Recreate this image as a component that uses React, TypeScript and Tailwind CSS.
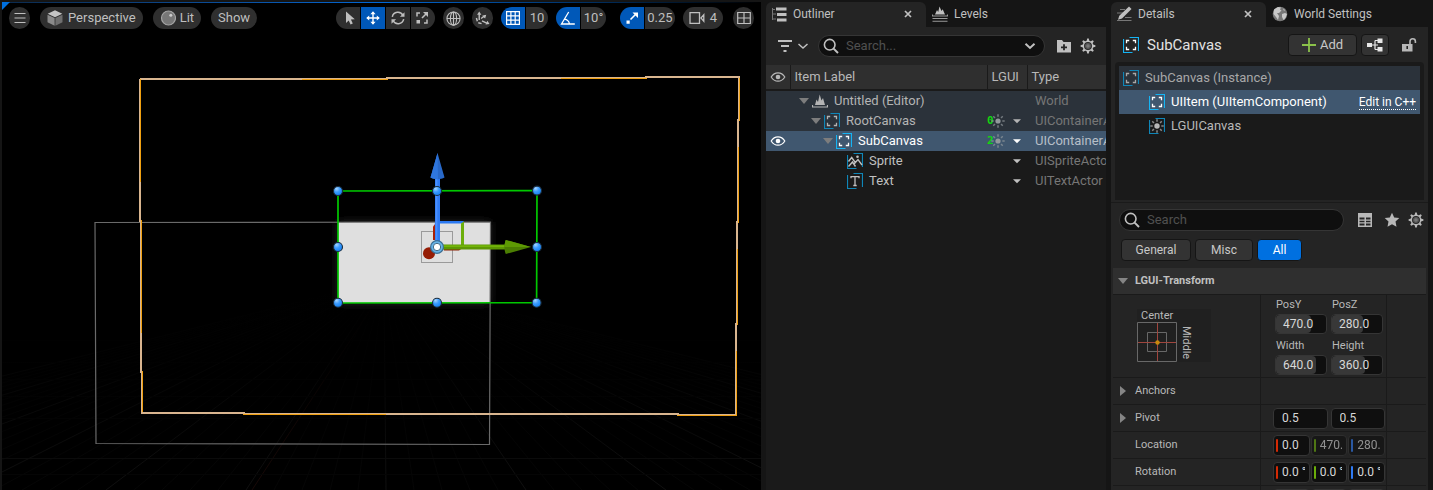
import type { ReactNode } from "react";

type IconProps = { className?: string; children: ReactNode; box?: string };

function Icon({ className = "size-4", children, box = "0 0 16 16" }: IconProps) {
  return (
    <svg viewBox={box} className={`shrink-0 ${className}`} fill="none" stroke="currentColor" strokeWidth="1.2" aria-hidden="true">
      {children}
    </svg>
  );
}

/* ---------- shared icons ---------- */

function GearIcon() {
  return (
    <Icon>
      {[0, 45, 90, 135, 180, 225, 270, 315].map((a) => (
        <path key={a} d="M6.6 3.2 7.2.6h1.6l.6 2.6z" fill="currentColor" stroke="none" transform={`rotate(${a} 8 8)`} />
      ))}
      <circle cx="8" cy="8" r="4.7" strokeWidth="1.5" />
      <circle cx="8" cy="8" r="2.4" fill="#777" stroke="#555" />
    </Icon>
  );
}

function SearchIcon() {
  return (
    <Icon>
      <circle cx="6.7" cy="6.7" r="5.3" strokeWidth="1.6" />
      <path d="m10.6 10.6 4.4 4.4" strokeWidth="2" />
    </Icon>
  );
}

function ChevronIcon() {
  return (
    <Icon className="size-3" box="0 0 12 12">
      <path d="m1.500 3.800 4.500 4.200 4.500-4.200" strokeWidth="2" />
    </Icon>
  );
}

function CloseIcon() {
  return (
    <Icon className="size-2" box="0 0 8 8">
      <path d="m1 1 6 6M7 1 1 7" strokeWidth="1.7" />
    </Icon>
  );
}

function EyeIcon() {
  return (
    <Icon>
      <path d="M1.2 8C4.600 2.400 11.400 2.400 14.800 8 11.400 13.600 4.600 13.600 1.200 8Z" />
      <circle cx="8" cy="8" r="2.3" fill="currentColor" stroke="none" />
    </Icon>
  );
}

function Frame({ bright, children }: { bright?: boolean; children: ReactNode }) {
  const c = bright ? "#15b4f4" : "#0f86b8";
  return (
    <Icon>
      <path d="M6.500.500h9v13.500M9.500 15.500h-9V2" stroke={c} />
      {children}
    </Icon>
  );
}

function CanvasIcon({ bright }: { bright?: boolean }) {
  return (
    <Frame bright={bright}>
      <path d="M3.500 6.200V3.500h2.700M9.800 3.500h2.700v2.700M12.500 9.800v2.700H9.800M6.200 12.500H3.500V9.800" strokeWidth="1.3" />
    </Frame>
  );
}

function SpriteIcon() {
  return (
    <Frame>
      <path d="m1.500 8.500 3.200-4 3.500 4.800M1.500 13.500 5.500 9l3 4.500M7 11l4-4.500 4 5.500" strokeWidth="1.4" />
      <circle cx="10.500" cy="3.800" r="1.300" fill="currentColor" stroke="none" />
    </Frame>
  );
}

function TextIcon() {
  return (
    <Frame>
      <path d="M4 5.300V3.700h8v1.600M8 3.700v8.800M6.300 12.500h3.400" strokeWidth="1.300" />
    </Frame>
  );
}

function Rays({ r = 2.6 }: { r?: number }) {
  return (
    <>
      <circle cx="8" cy="8" r={r} fill="currentColor" stroke="none" />
      {[0, 45, 90, 135, 180, 225, 270, 315].map((a) => (
        <path key={a} d="M8 3.700V1.300" strokeWidth="1.500" opacity="0.700" transform={`rotate(${a} 8 8)`} />
      ))}
    </>
  );
}

function LevelIcon() {
  return (
    <Icon>
      <path d="M3 12 4.500 6.500 6 9 7.700 1.500 9.500 7.500 11 5l2 7z" fill="currentColor" stroke="none" />
      <path d="M.5 12v2h15v-2" />
    </Icon>
  );
}

/* ---------- viewport ---------- */

const TAN = "#d9b58f";
const ORANGE = "#f0a010";

const outline: [number, number, number, number, string][] = [
  [140, 78, 248, 2, TAN], [302, 79, 86, 1, ORANGE],
  [386, 77, 261, 2, TAN], [561, 78, 86, 1, ORANGE],
  [645, 76, 94, 2, TAN],
  [139, 79, 2, 143, TAN], [140, 79, 1, 103, ORANGE],
  [140, 220, 2, 153, TAN], [141, 220, 1, 113, ORANGE],
  [141, 371, 2, 43, TAN], [142, 371, 1, 42, ORANGE],
  [142, 412, 103, 2, TAN],
  [243, 413, 436, 2, TAN], [243, 414, 143, 1, ORANGE],
  [677, 414, 60, 2, TAN], [677, 415, 60, 1, ORANGE],
  [738, 76, 2, 45, TAN], [739, 78, 1, 43, ORANGE],
  [737, 119, 2, 104, TAN], [738, 147, 1, 76, ORANGE],
  [736, 221, 2, 104, TAN], [737, 249, 1, 76, ORANGE],
  [735, 323, 2, 92, TAN], [736, 351, 1, 64, ORANGE],
];

const handles = [
  [338, 191], [437, 191], [537, 190.6], [338, 247], [537, 247], [338, 302.700], [437, 302.700], [536.600, 302.700],
];

function Scene() {
  return (
    <svg viewBox="2 2 759 488" preserveAspectRatio="xMidYMid slice" className="absolute inset-0 size-full" role="img" aria-label="Perspective scene">
      <defs>
        <radialGradient id="knob" cx="0.35" cy="0.25" r="0.800">
          <stop offset="0" stopColor="#a4d4ff" />
          <stop offset="0.450" stopColor="#3c9cff" />
          <stop offset="1" stopColor="#0f7cf0" />
        </radialGradient>
        <linearGradient id="floor" x1="0" y1="0" x2="0" y2="1">
          <stop offset="0" stopColor="#000" />
          <stop offset="0.350" stopColor="#000" stopOpacity="0.850" />
          <stop offset="1" stopColor="#000" stopOpacity="0.250" />
        </linearGradient>
        <filter id="glow" x="-20%" y="-20%" width="140%" height="140%">
          <feGaussianBlur stdDeviation="4" />
        </filter>
      </defs>
      <g strokeWidth="1">
        {Array.from({ length: 61 }, (_, i) => i - 30).map((i) => (
          <path key={i} d={`M${384 + i * 1.500} 292 ${386 + i * 28} 490`} stroke={i % 5 === 0 ? "#151515" : "#080808"} />
        ))}
        <path d="M382 292 252 490" stroke="#200c0a" />
        {[340, 362, 379, 396, 418, 458, 474].map((y) => (
          <path key={y} d={`M2 ${y}.500H761`} stroke={y === 458 ? "#121212" : "#070707"} />
        ))}
      </g>
      <rect x="2" y="285" width="759" height="205" fill="url(#floor)" />

      <rect x="338" y="222" width="152" height="81" fill="#2a2a2a" filter="url(#glow)" />
      <rect x="338" y="222" width="152" height="81" fill="#dfdfdf" />
      <path d="M95 222.500 490.500 222 489.500 444.500 96 443.500Z" fill="none" stroke="#6a6a6a" strokeWidth="1.200" />

      <g shapeRendering="crispEdges">
        {outline.map(([x, y, w, h, c], i) => (
          <rect key={i} x={x} y={y} width={w} height={h} fill={c} />
        ))}
      </g>

      <path d="M338 191 537 190.500 536.600 302.700 338 303Z" fill="none" stroke="#00c800" strokeWidth="1.700" />
      <rect x="421.500" y="231.500" width="31" height="31" fill="none" stroke="#9a9a9a" />

      <path d="M433 226.500 436 223v17h-3z" fill="#a82008" />
      <path d="M444 248.500h18l-3 2h-15z" fill="#8c2208" />
      <path d="M434 224.500 437 221h27l-2 2.500h-25z" fill="#2a78f0" />
      <path d="m461 223.500 3-2v25h-3z" fill="#6cae0a" />
      <circle cx="429" cy="253.300" r="6" fill="#951c04" />

      <path d="M435 176h5v66h-5z" fill="#2f7bf4" />
      <path d="M435.600 176h1.800v66h-1.800z" fill="#4a90ff" />
      <path d="M437.500 153 444.500 177.500c-3.500 2.200-10.500 2.200-14 0z" fill="#2868c8" />
      <path d="M437.500 153 438 179c-2.800 0-5.500-.4-7.500-1.500z" fill="#2f76dd" />
      <path d="M443 244.500h63v5h-63z" fill="#5d9704" />
      <path d="M443 245.200h63v1.800h-63z" fill="#72b408" />
      <path d="M531 247 505.800 254c-1.800-3.500-1.800-10.500 0-14z" fill="#4b7e02" />
      <path d="M531 247H504.600c0-2.800.3-5 1.200-7z" fill="#5e9a04" />

      {handles.map(([x, y], i) => (
        <circle key={i} cx={x} cy={y} r="4.500" fill="url(#knob)" stroke="#1c2d3c" strokeWidth="1.100" />
      ))}
      <circle cx="437" cy="247" r="7" fill="#3b6e93" />
      <circle cx="437" cy="247" r="5.800" fill="#67b5ea" />
      <circle cx="437" cy="247" r="3.700" fill="#fff" stroke="#406a86" strokeWidth="1" />
    </svg>
  );
}

const pill = "flex h-[22px] items-center justify-center bg-[#2f2f2f] text-[#bfbfbf]";
const onBtn = "flex h-[22px] w-6 items-center justify-center bg-[#0058b8] text-white";

function Toolbar() {
  return (
    <div className="relative flex items-center justify-between gap-4 px-[7px] pt-[5px] text-[13px]">
      <div className="flex gap-[10px]">
        <button aria-label="Viewport options" className={`${pill} w-[21px] rounded-full`}>
          <Icon className="size-3" box="0 0 12 12"><path d="M.5 1.500h11M.5 6h11M.5 10.500h11" /></Icon>
        </button>
        <button className={`${pill} gap-[5px] rounded-full px-[7px]`}>
          <Icon>
            <path d="M8 .3 15.300 3.700 8 7.200.7 3.700z" fill="#c4c4c4" stroke="none" />
            <path d="M.5 4.700 7.600 8v7.800L.5 12.200z" fill="#8a8a8a" stroke="none" />
            <path d="M15.500 4.700 8.400 8v7.800l7.100-3.600z" fill="#6f6f6f" stroke="none" />
          </Icon>
          Perspective
        </button>
        <button className={`${pill} gap-1 rounded-full px-[7px]`}>
          <Icon>
            <circle cx="8.500" cy="8" r="7" fill="#777" stroke="#a4a4a4" />
            <circle cx="10.800" cy="5.200" r="1.500" fill="#ccc" stroke="none" />
          </Icon>
          Lit
        </button>
        <button className={`${pill} rounded-full px-[7px]`}>Show</button>
      </div>

      <div className="flex gap-2">
        <div className="flex gap-px">
          <button aria-label="Select" className={`${pill} w-6 rounded-l-full`}>
            <Icon className="ml-1 size-4"><path d="M4 1.500v11.600l2.700-2.600 1.900 4 2.200-1-1.900-3.900 3.900-.4z" fill="currentColor" stroke="none" /></Icon>
          </button>
          <button aria-label="Move" className={onBtn}>
            <Icon>
              <path d="M8 2v12M2 8h12" strokeWidth="1.400" />
              <path d="m8 1.200 2.600 3H5.400zM8 14.800l2.600-3H5.400zM1.200 8l3-2.600v5.200zM14.800 8l-3-2.600v5.200z" fill="currentColor" stroke="none" />
            </Icon>
          </button>
          <button aria-label="Rotate" className={`${pill} w-6`}>
            <Icon>
              <path d="M2.300 6.800A5.700 5.700 0 0 1 13 5.500M13.700 9.200A5.700 5.700 0 0 1 3 10.500" strokeWidth="1.500" />
              <path d="M14.500 2.200v4.600H9.900zM1.500 13.800V9.200h4.600z" fill="currentColor" stroke="none" />
            </Icon>
          </button>
          <button aria-label="Scale" className={`${pill} w-6 rounded-r-full`}>
            <Icon className="mr-[2px] size-4">
              <path d="M3 6.500V3h3M10 13h3v-3.500" strokeWidth="1.500" />
              <path d="m8 8 4-4" strokeWidth="1.600" />
              <path d="M9 2h5v5zM2.500 10h3.500v3.500H2.500z" fill="currentColor" stroke="none" />
            </Icon>
          </button>
        </div>
        <button aria-label="World coordinates" className={`${pill} w-[21px] rounded-full`}>
          <Icon className="size-[15px]">
            <circle cx="8" cy="8" r="7" />
            <ellipse cx="8" cy="8" rx="3.300" ry="7" />
            <path d="M1 8h14M8 1v14" />
          </Icon>
        </button>
        <button aria-label="Surface snapping" className={`${pill} w-[21px] rounded-full`}>
          <Icon className="size-[15px]">
            <path d="M4.500 3v6.500M6.500 8l4-3M7.500 10.500l5 2.500" strokeWidth="1.500" />
            <path d="M4.500.5 6.800 4H2.200zM15.500 13.800l-4.300.5 2-3.800zM12 4l-1.200 4L7.500 5z" fill="currentColor" stroke="none" />
            <path d="M1.500 7.500 2.500 11M3.500 12.500l3.500 1" strokeWidth="1.500" />
          </Icon>
        </button>
        <div className="flex gap-px">
          <button aria-label="Grid snapping" className={`${onBtn} rounded-l-full`}>
            <Icon className="size-[14px]" box="0 0 14 14"><path d="M.6.600h12.800v12.800H.600zM4.900.600v12.800M9.200.600v12.800M.600 4.900h12.800M.600 9.200h12.800" /></Icon>
          </button>
          <button className={`${pill} w-[22px] rounded-r-full`}>10</button>
        </div>
        <div className="flex gap-px">
          <button aria-label="Rotation snapping" className={`${onBtn} rounded-l-full`}>
            <Icon><path d="M14.800 14H1.500L8.700 2M4.400 9.200A6 6 0 0 1 9.500 14M6.800 5" strokeWidth="1.300" /></Icon>
          </button>
          <button className={`${pill} w-[25px] rounded-r-full`}>10°</button>
        </div>
        <div className="ml-[6px] flex gap-px">
          <button aria-label="Scale snapping" className={`${onBtn} rounded-l-full`}>
            <Icon>
              <path d="m6.500 9.500 5-5" strokeWidth="1.600" />
              <path d="M8.500 2.500H14V8zM2.500 10.500h3.200v3.200H2.500z" fill="currentColor" stroke="none" />
            </Icon>
          </button>
          <button className={`${pill} w-[30px] rounded-r-full`}>0.25</button>
        </div>
        <button aria-label="Camera speed 4" className={`${pill} w-10 gap-[5px] rounded-full`}>
          <Icon className="size-4"><path d="M1 2.700h9.500v10.600H1zM12 8l2.800-3.300v6.600z" strokeWidth="1.300" /></Icon>
          4
        </button>
        <button aria-label="Maximize viewport" className={`${pill} ml-[2px] w-[21px] rounded-full`}>
          <Icon className="size-[14px]" box="0 0 14 14"><path d="M.7 1.500h12.600v11H.7zM7 1.500v11M.7 7h12.600" /></Icon>
        </button>
      </div>
    </div>
  );
}

/* ---------- outliner ---------- */

type Row = { name: string; type: string; icon: ReactNode; pad: string; open?: boolean; order?: string; menu?: boolean; tone: string; selected?: boolean };

const rows: Row[] = [
  { name: "Untitled (Editor)", type: "World", icon: <LevelIcon />, pad: "pl-2", open: true, tone: "bg-[#2b323a] text-[#b4b4b4]" },
  { name: "RootCanvas", type: "UIContainerActor", icon: <CanvasIcon />, pad: "pl-5", open: true, order: "0", menu: true, tone: "bg-[#2b323a] text-[#b4b4b4]" },
  { name: "SubCanvas", type: "UIContainerActor", icon: <CanvasIcon bright />, pad: "pl-8", open: true, order: "2", menu: true, tone: "bg-[#40576f] text-white", selected: true },
  { name: "Sprite", type: "UISpriteActor", icon: <SpriteIcon />, pad: "pl-[57px]", menu: true, tone: "text-[#c0c0c0]" },
  { name: "Text", type: "UITextActor", icon: <TextIcon />, pad: "pl-[57px]", menu: true, tone: "text-[#c0c0c0]" },
];

function Tab({ icon, label, active, width }: { icon: ReactNode; label: string; active?: boolean; width?: string }) {
  return (
    <div className={`flex h-[25px] items-center pb-[2px] text-xs ${width ?? ""} ${active ? "rounded-t-md bg-[#242424]" : ""}`}>
      <button className="flex flex-1 items-center gap-[6px] pl-[5px] text-[#c0c0c0]">
        {icon}
        {label}
      </button>
      {active && <button aria-label={`Close ${label}`} className="mr-[14px] text-[#c0c0c0]"><CloseIcon /></button>}
    </div>
  );
}

function SearchBox({ placeholder, children }: { placeholder: string; children?: ReactNode }) {
  return (
    <div className="flex h-[22px] min-w-0 flex-1 items-center rounded-full border border-[#353535] bg-[#0f0f0f] pl-1 pr-2 text-[#c0c0c0]">
      <SearchIcon />
      <input aria-label={placeholder} placeholder={placeholder} className="ml-[7px] min-w-0 flex-1 bg-transparent pb-px text-[13px] outline-none placeholder:text-[#505050]" />
      {children}
    </div>
  );
}

function Outliner() {
  return (
    <section className="ml-[5px] flex w-[340px] shrink-0 flex-col pt-[2px]">
      <div className="flex gap-px">
        <Tab
          active
          width="w-[160px]"
          label="Outliner"
          icon={
            <Icon>
              <path d="M1.500 2v12M1 3.500h3M1 8h4M1 13h4" stroke="#777" strokeWidth="1" />
              <path d="M5 1.500h10.500v3H5zM6 7h9.500v3H6zM6 12.500h9.500v3H6z" fill="currentColor" stroke="none" />
            </Icon>
          }
        />
        <Tab
          label="Levels"
          icon={
            <Icon>
              <path d="M3 8.500 5 4l1.200 2L7.500.5 9.500 5l1.200-1.800L13 8.500z" fill="currentColor" stroke="none" />
              <path d="M.5 8.500V10h15V8.500M.5 12.500h15M.5 15.300h15" strokeWidth="1.100" stroke="#999" />
            </Icon>
          }
        />
      </div>
      <div className="flex items-center bg-[#242424] py-2 pl-3 pr-[10px] text-[#c0c0c0]">
        <button aria-label="Filter" className="flex items-center gap-[5px]">
          <Icon className="size-[14px]" box="0 0 14 14"><path d="M0 2h14M3 7h8M5.500 12h3" strokeWidth="1.800" /></Icon>
          <Icon className="size-3" box="0 0 12 12"><path d="m1.500 4 4.500 4 4.500-4" strokeWidth="1.500" /></Icon>
        </button>
        <div className="ml-[9px] flex min-w-0 flex-1">
          <SearchBox placeholder="Search..."><button aria-label="Search options"><ChevronIcon /></button></SearchBox>
        </div>
        <button aria-label="New folder" className="ml-[11px]">
          <Icon>
            <path d="M1 2h5l1.500 2H15v10.500H1z" fill="currentColor" stroke="none" />
            <path d="M8 6.300v6M5 9.300h6" stroke="#242424" strokeWidth="1.800" />
          </Icon>
        </button>
        <button aria-label="Outliner settings" className="ml-2"><GearIcon /></button>
      </div>
      <div className="flex flex-1 flex-col gap-[2px] bg-[#1a1a1a]">
        <table className="w-full table-fixed border-collapse text-left text-[13px]">
          <colgroup>
            <col className="w-6" />
            <col />
            <col className="w-10" />
            <col className="w-[79px]" />
          </colgroup>
          <thead className="bg-[#2f2f2f] text-[#b8b8b8]">
            <tr className="h-6">
              <th className="p-0 font-normal"><span className="flex justify-center"><EyeIcon /></span></th>
              <th className="border-l border-[#1a1a1a] p-0 pl-1 font-normal">Item Label</th>
              <th className="border-l border-[#1a1a1a] p-0 pl-1 font-normal">LGUI</th>
              <th className="border-l border-[#1a1a1a] p-0 pl-1 font-normal">Type</th>
            </tr>
          </thead>
          <tbody className="before:block before:h-[2px] before:bg-[#1a1a1a]">
            {rows.map((r) => (
              <tr key={r.name} className={`h-5 ${r.tone}`}>
                <td className="p-0">{r.selected && <span className="flex justify-center"><EyeIcon /></span>}</td>
                <td className="p-0">
                  <div className={`flex items-center ${r.pad}`}>
                    {r.open && (
                      <Icon className="ml-px mr-[3px] size-[10px] text-[#7d7d7d]" box="0 0 10 10"><path d="M0 2h10L5 8z" fill="currentColor" stroke="none" /></Icon>
                    )}
                    {r.icon}
                    <span className="ml-[6px] leading-5">{r.name}</span>
                  </div>
                </td>
                <td className="p-0">
                  {r.menu && (
                    <div className="flex items-center justify-between pr-[6px]">
                      <span className="flex items-center">
                        {r.order && (
                          <>
                            <span className="w-[3px] font-['DejaVu_Sans_Mono',monospace] text-[11px] font-bold leading-5 text-[#12d412]">{r.order}</span>
                            <span className="text-[#93999c]"><Icon className="size-4"><Rays /></Icon></span>
                          </>
                        )}
                      </span>
                      <button aria-label={`${r.name} options`}>
                        <Icon className="size-2" box="0 0 8 8"><path d="M0 2.200h8L4 6.200z" fill="currentColor" stroke="none" /></Icon>
                      </button>
                    </div>
                  )}
                </td>
                <td className={`overflow-hidden whitespace-nowrap p-0 pl-2 ${r.selected ? "text-[#b7bfc8]" : "text-[#767676]"}`}>{r.type}</td>
              </tr>
            ))}
          </tbody>
        </table>
      </div>
    </section>
  );
}

/* ---------- details ---------- */

const field = "block h-[21px] min-w-0 rounded border border-[#353535] bg-[#0f0f0f] pb-px text-xs text-[#d8d8d8] outline-none";

function SliderField({ label, value, fill }: { label: string; value: string; fill: string }) {
  return (
    <label className="flex w-[52px] flex-col">
      <span className="pl-px leading-[18px]">{label}</span>
      <span className="relative flex h-5 rounded border border-[#353535] bg-[#0f0f0f]">
        <span className={`absolute inset-y-0 left-0 rounded bg-[#383838] ${fill}`} />
        <input defaultValue={value} className="relative w-full min-w-0 bg-transparent pb-px pl-[7px] text-xs text-[#d8d8d8] outline-none" />
      </span>
    </label>
  );
}

function PropertyRow({ label, expand, children }: { label: string; expand?: boolean; children?: ReactNode }) {
  return (
    <div className="grid grid-cols-[147px_127px_1fr] border-b border-[#1a1a1a]">
      <div className="flex h-[26px] items-center pl-[7px]">
        <span className="w-[15px] text-[#858585]">
          {expand && (
            <button aria-label={`Expand ${label}`} className="block">
              <Icon className="size-[10px]" box="0 0 10 10"><path d="M0 0v10l6-5z" fill="currentColor" stroke="none" /></Icon>
            </button>
          )}
        </span>
        {label}
      </div>
      <div className="flex items-center border-x border-[#1a1a1a] pl-3 pr-px">{children}</div>
    </div>
  );
}

function Vector({ name, values }: { name: string; values: { v: string; bar: string; dim?: boolean }[] }) {
  return (
    <div className="flex w-full gap-px">
      {values.map(({ v, bar, dim }, i) => (
        <div key={i} className={`flex h-[21px] min-w-0 flex-1 items-center rounded border border-[#353535] bg-[#0f0f0f] pl-[2px] pr-1 ${dim ? "opacity-60" : ""}`}>
          <span className={`h-[13px] w-[2px] shrink-0 rounded-full ${bar}`} />
          <input aria-label={`${name} ${"XYZ"[i]}`} defaultValue={v} disabled={dim} className="ml-1 w-full min-w-0 bg-transparent pb-px text-xs text-[#d8d8d8] outline-none" />
        </div>
      ))}
    </div>
  );
}

function Details() {
  const small = "flex h-[22px] items-center justify-center rounded border border-[#151515] bg-[#333] text-[#c8c8c8]";
  return (
    <section className="ml-[5px] mr-[5px] flex w-[317px] shrink-0 flex-col pt-[2px] text-[#b8b8b8]">
      <div className="flex gap-px">
        <Tab
          active
          width="w-[155px]"
          label="Details"
          icon={
            <Icon>
              <path d="M4 3.500h5M1 7h6M9 11.500h6.500M1 14.500h14.500" stroke="#777" />
              <path d="M13 .5 15.500 3 6 12.500l-4 1.300 1.300-4z" fill="currentColor" stroke="none" />
            </Icon>
          }
        />
        <Tab
          label="World Settings"
          icon={
            <Icon>
              <circle cx="8" cy="8" r="7.300" fill="#777" stroke="none" />
              <path d="M2 3.500 6 1l3 .5-1 2 1.500 1L7 7H5l2 3-1 4-2-3-2.500-3zM10 8l3-1 2 1-1.500 4-2 2-1.500-3zM11 2.500l2 1.500-1 1z" fill="#c8c8c8" stroke="none" />
            </Icon>
          }
        />
      </div>

      <div className="flex flex-1 flex-col bg-[#242424]">
        <div className="flex h-[35px] items-center pl-3 pr-[11px] pt-px">
          <span className="text-white"><CanvasIcon bright /></span>
          <h2 className="ml-2 flex-1 text-[15px] text-[#e2e2e2]">SubCanvas</h2>
          <button className={`${small} h-6 w-[69px] gap-1 text-[13px]`}>
            <Icon className="size-[14px] text-[#8bc24a]" box="0 0 14 14"><path d="M7 0v14M0 7h14" strokeWidth="1.800" /></Icon>
            Add
          </button>
          <button aria-label="Edit blueprint" className={`${small} ml-1 w-7`}>
            <Icon className="size-4 text-[#e8e8e8]">
              <path d="M4 8h7M8 3.500v9M8 3.500h3M8 12.500h3" />
              <path d="M0 6h5v4H0zM10.500 1.500h5v4.500h-5zM10.500 10h5v4.500h-5z" fill="currentColor" stroke="none" />
            </Icon>
          </button>
          <button aria-label="Lock details" className="ml-3">
            <Icon>
              <path d="M1 7h10.500v7.500H1z" fill="currentColor" stroke="none" />
              <path d="M9 7V4.500a2.700 2.700 0 0 1 5.400 0V6" strokeWidth="1.600" />
              <path d="M6.200 9v3" stroke="#242424" strokeWidth="1.600" />
            </Icon>
          </button>
        </div>

        <div className="mx-1 h-[138px] rounded-t bg-[#1a1a1a] p-1 text-[13px]">
          <div className="flex h-6 items-center gap-[6px] bg-[#2b323a] pl-1 text-[#a8a8a8]">
            <CanvasIcon />
            SubCanvas (Instance)
          </div>
          <div className="flex h-6 items-center gap-[6px] bg-[#40576f] pl-[30px] pr-1 text-white">
            <CanvasIcon bright />
            <span className="flex-1">UIItem (UIItemComponent)</span>
            <a href="#source" className="border-b border-dotted border-white text-xs leading-[14px]">Edit in C++</a>
          </div>
          <div className="flex h-6 items-center gap-[6px] pl-[30px]">
            <Frame><Rays r={2.700} /></Frame>
            LGUICanvas
          </div>
        </div>

        <div className="mt-[2px] border-t border-[#1a1a1a] px-2 pt-[6px]">
          <div className="flex items-center">
            <div className="mr-[13px] flex min-w-0 flex-1">
              <SearchBox placeholder="Search" />
            </div>
            <button aria-label="Property matrix">
              <Icon>
                <path d="M1 1h14v14H1z" fill="currentColor" stroke="none" />
                <path d="M2.500 5.500h5v2h-5zM9 5.500h4.500v2H9zM2.500 8.700h5v1.600h-5zM9 8.700h4.500v1.600H9zM2.500 11.600h5v2h-5zM9 11.600h4.500v2H9z" fill="#242424" stroke="none" />
              </Icon>
            </button>
            <button aria-label="Favorites" className="ml-[11px]">
              <Icon><path d="m8 .8 2.200 4.700 5.100.6-3.800 3.500 1 5.100L8 12.200l-4.500 2.500 1-5.100L.7 6.100l5.100-.6z" fill="currentColor" stroke="none" /></Icon>
            </button>
            <button aria-label="Details settings" className="-mr-1 ml-2"><GearIcon /></button>
          </div>
          <div className="flex gap-1 pb-[7px] pl-[2px] pt-2 text-xs">
            <button className={`${small} w-[70px]`}>General</button>
            <button className={`${small} w-[58px]`}>Misc</button>
            <button className="flex h-[22px] w-[45px] items-center justify-center rounded border border-[#151515] bg-[#0070e0] text-white">All</button>
          </div>
        </div>

        <div className="mx-[2px] text-[11px]">
          <button className="flex h-[27px] w-full items-center gap-[7px] border-b border-[#1a1a1a] bg-[#2f2f2f] pb-px pl-[5px] text-left font-bold text-[#c0c0c0]">
            <Icon className="size-[10px] text-[#858585]" box="0 0 10 10"><path d="M0 2h10L5 8z" fill="currentColor" stroke="none" /></Icon>
            LGUI-Transform
          </button>

          <div className="grid grid-cols-[147px_127px_1fr] border-b border-[#1a1a1a]">
            <div className="pl-6 pt-[14px]">
              <div className="w-[74px] bg-[#202020]">
                <div className="pl-1 leading-[13px]">Center</div>
                <div className="flex gap-[3px]">
                  <svg viewBox="0 0 40 40" className="size-10" fill="none" aria-hidden="true">
                    <path d="M.5.500h39v39H.500zM10.500 10.500h19v19h-19z" stroke="#686868" />
                    <path d="M20.500 1v38M1 20.500h38" stroke="#a0463e" />
                    <circle cx="20.500" cy="20.500" r="2.200" fill="#c8880c" />
                  </svg>
                  <span className="pt-1 leading-[12px] [writing-mode:vertical-rl]">Middle</span>
                </div>
              </div>
            </div>
            <div className="grid grid-cols-[52px_52px] gap-x-1 gap-y-[3px] border-x border-[#1a1a1a] pb-[2px] pl-[14px] pt-px">
              <SliderField label="PosY" value="470.0" fill="w-[35px]" />
              <SliderField label="PosZ" value="280.0" fill="w-[31px]" />
              <SliderField label="Width" value="640.0" fill="w-[40px]" />
              <SliderField label="Height" value="360.0" fill="w-[33px]" />
            </div>
          </div>
          <PropertyRow label="Anchors" expand />
          <PropertyRow label="Pivot" expand>
            <div className="flex w-full gap-[3px]">
              <input aria-label="Pivot X" defaultValue="0.5" className={`${field} w-full pl-2`} />
              <input aria-label="Pivot Y" defaultValue="0.5" className={`${field} w-full pl-2`} />
            </div>
          </PropertyRow>
          <PropertyRow label="Location">
            <Vector name="Location" values={[{ v: "0.0", bar: "bg-[#d42a04]" }, { v: "470.0", bar: "bg-[#6cae0a]", dim: true }, { v: "280.0", bar: "bg-[#2f7bf4]", dim: true }]} />
          </PropertyRow>
          <PropertyRow label="Rotation">
            <Vector name="Rotation" values={[{ v: "0.0 °", bar: "bg-[#d42a04]" }, { v: "0.0 °", bar: "bg-[#6cae0a]" }, { v: "0.0 °", bar: "bg-[#2f7bf4]" }]} />
          </PropertyRow>
          <div className="grid h-1 grid-cols-[147px_127px_1fr]">
            <span />
            <span className="flex gap-px overflow-hidden border-x border-[#1a1a1a] pl-3 pr-px pt-[3px]">
              {["X", "Y", "Z"].map((a) => (
                <span key={a} className="h-5 flex-1 rounded border border-[#353535] bg-[#0f0f0f]" />
              ))}
            </span>
          </div>
        </div>
      </div>
    </section>
  );
}

export default function App() {
  return (
    <div className="flex min-h-screen bg-[#151515] font-[Roboto,sans-serif] text-[13px] leading-4">
      <main className="relative ml-[2px] mt-[2px] min-w-[700px] flex-1 overflow-hidden bg-black">
        <Scene />
        <div className="absolute inset-x-0 top-0 h-px bg-linear-to-r from-[#0b2a4d] via-[#0068d8] to-transparent" />
        <svg viewBox="0 0 8 8" className="absolute left-0 top-0 size-2" aria-hidden="true"><path d="M0 0h8L0 8z" fill="#0070e0" /></svg>
        <Toolbar />
      </main>
      <Outliner />
      <Details />
    </div>
  );
}
